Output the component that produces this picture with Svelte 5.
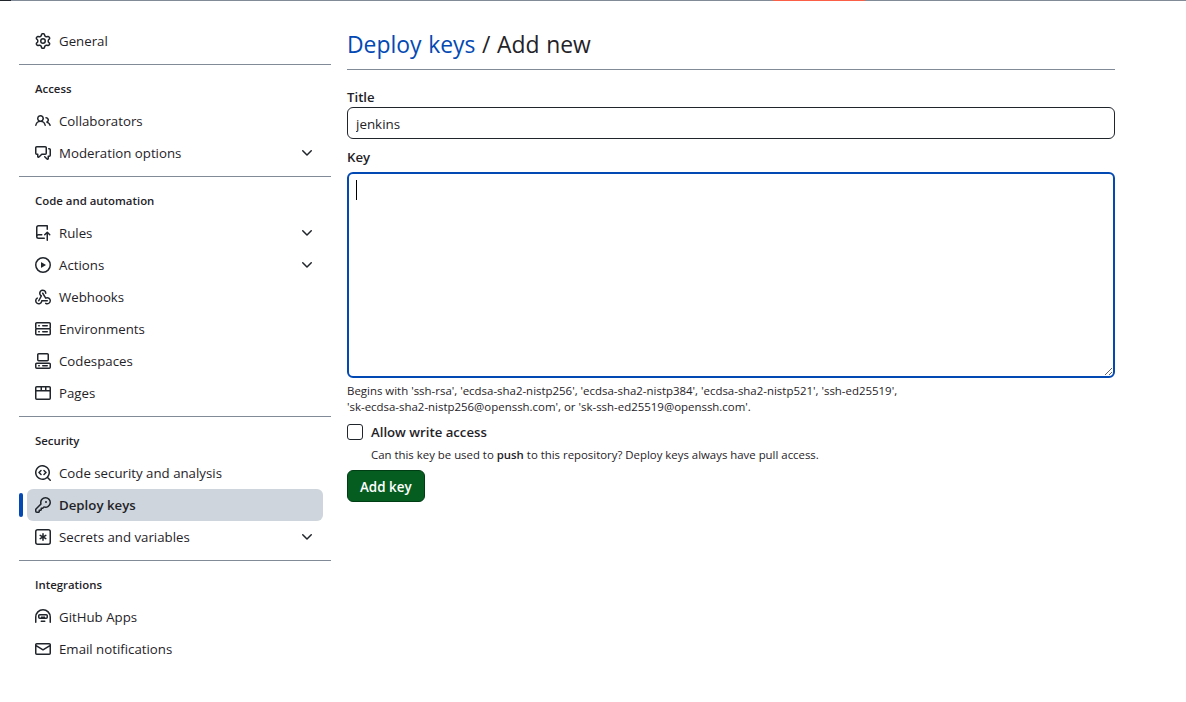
<script>
	const icons = {
		gear: "M8 0a8.2 8.2 0 0 1 .701.031C9.444.095 9.99.645 10.16 1.29l.288 1.107c.018.066.079.158.212.224.231.114.454.243.668.386.123.082.233.09.299.071l1.103-.303c.644-.176 1.392.021 1.82.63.27.385.506.792.704 1.218.315.675.111 1.422-.364 1.891l-.814.806c-.049.048-.098.147-.088.294.016.257.016.515 0 .772-.01.147.038.246.088.294l.814.806c.475.469.679 1.216.364 1.891a7.977 7.977 0 0 1-.704 1.217c-.428.61-1.176.807-1.82.63l-1.102-.302c-.067-.019-.177-.011-.3.071a5.909 5.909 0 0 1-.668.386c-.133.066-.194.158-.211.224l-.29 1.106c-.168.646-.715 1.196-1.458 1.26a8.006 8.006 0 0 1-1.402 0c-.743-.064-1.289-.614-1.458-1.26l-.289-1.106c-.018-.066-.079-.158-.212-.224a5.738 5.738 0 0 1-.668-.386c-.123-.082-.233-.09-.299-.071l-1.103.303c-.644.176-1.392-.021-1.82-.63a8.12 8.12 0 0 1-.704-1.218c-.315-.675-.111-1.422.363-1.891l.815-.806c.05-.048.098-.147.088-.294a6.214 6.214 0 0 1 0-.772c.01-.147-.038-.246-.088-.294l-.815-.806C.635 6.045.431 5.298.746 4.623a7.92 7.92 0 0 1 .704-1.217c.428-.61 1.176-.807 1.82-.63l1.102.302c.067.019.177.011.3-.071.214-.143.437-.272.668-.386.133-.066.194-.158.211-.224l.29-1.106C6.009.645 6.556.095 7.299.03 7.53.01 7.764 0 8 0Zm-.571 1.525c-.036.003-.108.036-.137.146l-.289 1.105c-.147.561-.549.967-.998 1.189-.173.086-.34.183-.5.29-.417.278-.97.423-1.529.27l-1.103-.303c-.109-.03-.175.016-.195.045-.22.312-.412.644-.573.99-.014.031-.021.11.059.19l.815.806c.411.406.562.957.53 1.456a4.709 4.709 0 0 0 0 .582c.032.499-.119 1.05-.53 1.456l-.815.806c-.081.08-.073.159-.059.19.162.346.353.677.573.989.02.03.085.076.195.046l1.102-.303c.56-.153 1.113-.008 1.53.27.161.107.328.204.501.29.447.222.85.629.997 1.189l.289 1.105c.029.109.101.143.137.146a6.6 6.6 0 0 0 1.142 0c.036-.003.108-.036.137-.146l.289-1.105c.147-.561.549-.967.998-1.189.173-.086.34-.183.5-.29.417-.278.97-.423 1.529-.27l1.103.303c.109.029.175-.016.195-.045.22-.313.411-.644.573-.99.014-.031.021-.11-.059-.19l-.815-.806c-.411-.406-.562-.957-.53-1.456a4.709 4.709 0 0 0 0-.582c-.032-.499.119-1.05.53-1.456l.815-.806c.081-.08.073-.159.059-.19a6.464 6.464 0 0 0-.573-.989c-.02-.03-.085-.076-.195-.046l-1.102.303c-.56.153-1.113.008-1.53-.27a4.44 4.44 0 0 0-.501-.29c-.447-.222-.85-.629-.997-1.189l-.289-1.105c-.029-.11-.101-.143-.137-.146a6.6 6.6 0 0 0-1.142 0ZM11 8a3 3 0 1 1-6 0 3 3 0 0 1 6 0ZM9.5 8a1.5 1.5 0 1 0-3.001.001A1.5 1.5 0 0 0 9.5 8Z",
		people: "M2 5.5a3.5 3.5 0 1 1 5.898 2.549 5.508 5.508 0 0 1 3.034 4.084.75.75 0 1 1-1.482.235 4 4 0 0 0-7.9 0 .75.75 0 0 1-1.482-.236A5.507 5.507 0 0 1 3.102 8.05 3.493 3.493 0 0 1 2 5.5ZM11 4a3.001 3.001 0 0 1 2.22 5.018 5.01 5.01 0 0 1 2.56 3.012.749.749 0 0 1-.885.954.752.752 0 0 1-.549-.514 3.507 3.507 0 0 0-2.522-2.372.75.75 0 0 1-.574-.73v-.352a.75.75 0 0 1 .416-.672A1.5 1.5 0 0 0 11 5.5.75.75 0 0 1 11 4Zm-5.5-.5a2 2 0 1 0-.001 3.999A2 2 0 0 0 5.5 3.5Z",
		discussion: "M1.75 1h8.5c.966 0 1.75.784 1.75 1.75v5.5A1.75 1.75 0 0 1 10.25 10H7.061l-2.574 2.573A1.458 1.458 0 0 1 2 11.543V10h-.25A1.75 1.75 0 0 1 0 8.25v-5.5C0 1.784.784 1 1.75 1ZM1.5 2.75v5.5c0 .138.112.25.25.25h1a.75.75 0 0 1 .75.75v2.19l2.72-2.72a.749.749 0 0 1 .53-.22h3.5a.25.25 0 0 0 .25-.25v-5.5a.25.25 0 0 0-.25-.25h-8.5a.25.25 0 0 0-.25.25Zm13 2a.25.25 0 0 0-.25-.25h-.5a.75.75 0 0 1 0-1.5h.5c.966 0 1.75.784 1.75 1.75v5.5A1.75 1.75 0 0 1 14.25 12H14v1.543a1.458 1.458 0 0 1-2.487 1.03L9.22 12.28a.749.749 0 0 1 .326-1.275.749.749 0 0 1 .734.215l2.22 2.22v-2.19a.75.75 0 0 1 .75-.75h1a.25.25 0 0 0 .25-.25Z",
		push: "M1 2.5A2.5 2.5 0 0 1 3.5 0h8.75a.75.75 0 0 1 .75.75v3.5a.75.75 0 0 1-1.5 0V1.5h-8a1 1 0 0 0-1 1v6.708A2.493 2.493 0 0 1 3.5 9h3.25a.75.75 0 0 1 0 1.5H3.5a1 1 0 0 0 0 2h5.75a.75.75 0 0 1 0 1.5H3.5A2.5 2.5 0 0 1 1 11.5Zm13.23 7.79h-.001l-1.224-1.224v6.184a.75.75 0 0 1-1.5 0V9.066L10.28 10.29a.75.75 0 0 1-1.06-1.061l2.505-2.504a.75.75 0 0 1 1.06 0L15.29 9.23a.751.751 0 0 1-.018 1.042.751.751 0 0 1-1.042.018Z",
		play: "M8 0a8 8 0 1 1 0 16A8 8 0 0 1 8 0ZM1.5 8a6.5 6.5 0 1 0 13 0 6.5 6.5 0 0 0-13 0Zm4.879-2.773 4.264 2.559a.25.25 0 0 1 0 .428l-4.264 2.559A.25.25 0 0 1 6 10.559V5.442a.25.25 0 0 1 .379-.215Z",
		webhook: "M5.5 4.25a2.25 2.25 0 0 1 4.5 0 .75.75 0 0 0 1.5 0 3.75 3.75 0 1 0-6.14 2.889l-2.272 4.258a.75.75 0 0 0 1.324.706L7 7.25a.75.75 0 0 0-.309-1.015A2.25 2.25 0 0 1 5.5 4.25Z M7.364 3.607a.75.75 0 0 1 1.03.257l2.608 4.349a3.75 3.75 0 1 1-.628 6.785.75.75 0 0 1 .752-1.299 2.25 2.25 0 1 0-.033-3.88.75.75 0 0 1-1.03-.256L7.107 4.636a.75.75 0 0 1 .257-1.03Z M2.9 8.776A.75.75 0 0 1 2.625 9.8 2.25 2.25 0 1 0 6 11.75a.75.75 0 0 1 .75-.751h5.5a.75.75 0 0 1 0 1.5H7.425a3.751 3.751 0 1 1-5.55-3.998.75.75 0 0 1 1.024.274Z",
		server: "M1.75 1h12.5c.966 0 1.75.784 1.75 1.75v4c0 .372-.116.717-.314 1 .198.283.314.628.314 1v4a1.75 1.75 0 0 1-1.75 1.75H1.75A1.75 1.75 0 0 1 0 12.75v-4c0-.358.109-.707.314-1a1.739 1.739 0 0 1-.314-1v-4C0 1.784.784 1 1.75 1ZM1.5 2.75v4c0 .138.112.25.25.25h12.5a.25.25 0 0 0 .25-.25v-4a.25.25 0 0 0-.25-.25H1.75a.25.25 0 0 0-.25.25Zm.25 5.75a.25.25 0 0 0-.25.25v4c0 .138.112.25.25.25h12.5a.25.25 0 0 0 .25-.25v-4a.25.25 0 0 0-.25-.25ZM7 4.75A.75.75 0 0 1 7.75 4h4.5a.75.75 0 0 1 0 1.5h-4.5A.75.75 0 0 1 7 4.75ZM7.75 10h4.5a.75.75 0 0 1 0 1.5h-4.5a.75.75 0 0 1 0-1.5ZM3 4.75A.75.75 0 0 1 3.75 4h.5a.75.75 0 0 1 0 1.5h-.5A.75.75 0 0 1 3 4.75ZM3.75 10h.5a.75.75 0 0 1 0 1.5h-.5a.75.75 0 0 1 0-1.5Z",
		codespaces: "M0 11.25c0-.966.784-1.75 1.75-1.75h12.5c.966 0 1.75.784 1.75 1.75v3A1.75 1.75 0 0 1 14.25 16H1.75A1.75 1.75 0 0 1 0 14.25Zm2-9.5C2 .784 2.784 0 3.75 0h8.5C13.216 0 14 .784 14 1.75v5a1.75 1.75 0 0 1-1.75 1.75h-8.5A1.75 1.75 0 0 1 2 6.75Zm1.75-.25a.25.25 0 0 0-.25.25v5c0 .138.112.25.25.25h8.5a.25.25 0 0 0 .25-.25v-5a.25.25 0 0 0-.25-.25Zm-2 9.5a.25.25 0 0 0-.25.25v3c0 .138.112.25.25.25h12.5a.25.25 0 0 0 .25-.25v-3a.25.25 0 0 0-.25-.25Z M7 12.75a.75.75 0 0 1 .75-.75h4.5a.75.75 0 0 1 0 1.5h-4.5a.75.75 0 0 1-.75-.75Zm-4 0a.75.75 0 0 1 .75-.75h.5a.75.75 0 0 1 0 1.5h-.5a.75.75 0 0 1-.75-.75Z",
		browser: "M0 2.75C0 1.784.784 1 1.75 1h12.5c.966 0 1.75.784 1.75 1.75v10.5A1.75 1.75 0 0 1 14.25 15H1.75A1.75 1.75 0 0 1 0 13.25ZM14.5 6.5h-13v6.75c0 .138.112.25.25.25h12.5a.25.25 0 0 0 .25-.25ZM5.5 2.5H1.75a.25.25 0 0 0-.25.25V5h4ZM7 2.5V5h3V2.5Zm4.5 0V5h3V2.75a.25.25 0 0 0-.25-.25Z",
		codescan: "M8.47 4.97a.75.75 0 0 0 0 1.06L9.94 7.5 8.47 8.97a.75.75 0 1 0 1.06 1.06l2-2a.75.75 0 0 0 0-1.06l-2-2a.75.75 0 0 0-1.06 0ZM6.53 6.03a.75.75 0 0 0-1.06-1.06l-2 2a.75.75 0 0 0 0 1.06l2 2a.75.75 0 1 0 1.06-1.06L5.06 7.5l1.47-1.47Z M12.246 13.307a7.501 7.501 0 1 1 1.06-1.06l2.474 2.473a.749.749 0 0 1-.326 1.275.749.749 0 0 1-.734-.215ZM1.5 7.5a6.002 6.002 0 0 0 3.608 5.504 6.002 6.002 0 0 0 6.486-1.117.748.748 0 0 1 .292-.293A6 6 0 1 0 1.5 7.5Z",
		key: "M10.5 0a5.499 5.499 0 1 1-1.288 10.848l-.932.932a.749.749 0 0 1-.53.22H7v.75a.749.749 0 0 1-.22.53l-.5.5a.749.749 0 0 1-.53.22H5v.75a.749.749 0 0 1-.22.53l-.5.5a.749.749 0 0 1-.53.22h-2A1.75 1.75 0 0 1 0 14.25v-2c0-.199.079-.389.22-.53l4.932-4.932A5.5 5.5 0 0 1 10.5 0Zm-4 5.5c-.001.431.069.86.205 1.269a.75.75 0 0 1-.181.768L1.5 12.56v1.69c0 .138.112.25.25.25h1.69l.06-.06v-1.19a.75.75 0 0 1 .75-.75h1.19l.06-.06v-1.19a.75.75 0 0 1 .75-.75h1.19l1.023-1.025a.75.75 0 0 1 .768-.18A4 4 0 1 0 6.5 5.5ZM11 6a1 1 0 1 1 0-2 1 1 0 0 1 0 2Z",
		asterisk: "M0 2.75A2.75 2.75 0 0 1 2.75 0h10.5A2.75 2.75 0 0 1 16 2.75v10.5A2.75 2.75 0 0 1 13.25 16H2.75A2.75 2.75 0 0 1 0 13.25ZM2.75 1.5c-.69 0-1.25.56-1.25 1.25v10.5c0 .69.56 1.25 1.25 1.25h10.5c.69 0 1.25-.56 1.25-1.25V2.75c0-.69-.56-1.25-1.25-1.25Z M8 4a.75.75 0 0 1 .75.75V6.7l1.69-.975a.75.75 0 0 1 .75 1.3L9.5 8l1.69.976a.75.75 0 0 1-.75 1.298L8.75 9.299v1.951a.75.75 0 0 1-1.5 0V9.299l-1.69.975a.75.75 0 0 1-.75-1.298L6.5 8l-1.69-.975a.75.75 0 0 1 .75-1.3l1.69.976V4.75A.75.75 0 0 1 8 4Z",
		hubot: "M0 8a8 8 0 0 1 16 0v5.25a.75.75 0 0 1-1.5 0V8a6.5 6.5 0 1 0-13 0v5.25a.75.75 0 0 1-1.5 0Zm3-1.25C3 5.784 3.784 5 4.75 5h6.5c.966 0 1.75.784 1.75 1.75v1.5A1.75 1.75 0 0 1 11.25 10h-6.5A1.75 1.75 0 0 1 3 8.25Zm1.75-.25a.25.25 0 0 0-.25.25v1.5c0 .138.112.25.25.25h6.5a.25.25 0 0 0 .25-.25v-1.5a.25.25 0 0 0-.25-.25ZM6 7.5h4V9H6ZM6.25 11.5h3.5a.75.75 0 0 1 0 1.5h-3.5a.75.75 0 0 1 0-1.5Z",
		mail: "M1.75 2h12.5c.966 0 1.75.784 1.75 1.75v8.5A1.75 1.75 0 0 1 14.25 14H1.75A1.75 1.75 0 0 1 0 12.25v-8.5C0 2.784.784 2 1.75 2ZM1.5 12.251c0 .138.112.25.25.25h12.5a.25.25 0 0 0 .25-.25V5.809L8.38 9.397a.75.75 0 0 1-.76 0L1.5 5.809v6.442Zm13-8.181v-.32a.25.25 0 0 0-.25-.25H1.75a.25.25 0 0 0-.25.25v.32L8 7.88l6.5-3.81Z",
		chevron: "M12.78 5.22a.749.749 0 0 1 0 1.06l-4.25 4.25a.749.749 0 0 1-1.06 0L3.22 6.28a.749.749 0 1 1 1.06-1.06L8 8.939l3.72-3.719a.749.749 0 0 1 1.06 0Z",
	};

	const groups = [
		{ items: [{ label: "General", icon: "gear" }] },
		{
			title: "Access",
			items: [
				{ label: "Collaborators", icon: "people" },
				{ label: "Moderation options", icon: "discussion", more: true },
			],
		},
		{
			title: "Code and automation",
			items: [
				{ label: "Rules", icon: "push", more: true },
				{ label: "Actions", icon: "play", more: true },
				{ label: "Webhooks", icon: "webhook" },
				{ label: "Environments", icon: "server" },
				{ label: "Codespaces", icon: "codespaces" },
				{ label: "Pages", icon: "browser" },
			],
		},
		{
			title: "Security",
			items: [
				{ label: "Code security and analysis", icon: "codescan" },
				{ label: "Deploy keys", icon: "key", active: true },
				{ label: "Secrets and variables", icon: "asterisk", more: true },
			],
		},
		{
			title: "Integrations",
			items: [
				{ label: "GitHub Apps", icon: "hubot" },
				{ label: "Email notifications", icon: "mail" },
			],
		},
	];
</script>

<div class="topline">
	<span class="seg dark"></span>
	<span class="seg first"></span>
	<span class="seg orange"></span>
	<span class="seg rest"></span>
</div>

<div class="page">
	<nav class="sidebar">
		{#each groups as group, g (g)}
			{#if g > 0}
				<hr />
			{/if}
			{#if group.title}
				<h3>{group.title}</h3>
			{/if}
			{#each group.items as item (item.label)}
				<div class="row">
					{#if item.active}
						<span class="marker"></span>
					{/if}
					<div class="item" class:active={item.active}>
						<svg viewBox="0 0 16 16" width="16" height="16"><path d={icons[item.icon]} /></svg>
						<span class="label">{item.label}</span>
						{#if item.more}
							<svg class="chevron" viewBox="0 0 16 16" width="16" height="16"><path d={icons.chevron} /></svg>
						{/if}
					</div>
				</div>
			{/each}
		{/each}
	</nav>

	<main>
		<h2><a href="#keys">Deploy keys</a> / Add new</h2>

		<form>
			<label class="field" for="title">Title</label>
			<input id="title" type="text" value="jenkins" />

			<label class="field key" for="key">Key</label>
			<div class="keybox">
				<textarea id="key"></textarea>
				<span class="caret"></span>
			</div>
			<p class="note begins">
				Begins with 'ssh-rsa', 'ecdsa-sha2-nistp256', 'ecdsa-sha2-nistp384', 'ecdsa-sha2-nistp521', 'ssh-ed25519',<br />
				'sk-ecdsa-sha2-nistp256@openssh.com', or 'sk-ssh-ed25519@openssh.com'.
			</p>

			<div class="check">
				<input id="write" type="checkbox" />
				<label for="write">Allow write access</label>
			</div>
			<p class="note hint">Can this key be used to <b>push</b> to this repository? Deploy keys always have pull access.</p>

			<button type="button">Add key</button>
		</form>
	</main>
</div>

<style>
	:global(body) {
		background: #fff;
		color: #1f2328;
		font-family: "Open Sans", "Noto Sans", sans-serif;
		font-size: 13.4px;
	}

	.topline {
		display: flex;
		height: 1px;
		background: #818b98;
	}

	.seg {
		height: 1px;
	}

	.dark {
		width: 11px;
		background: #20252c;
	}

	.first {
		width: 762px;
	}

	.orange {
		width: 92px;
		background: #fb5f45;
	}

	.page {
		display: flex;
		align-items: flex-start;
		padding: 24px 0 0 19px;
	}

	.sidebar {
		width: 312px;
		flex: none;
	}

	hr {
		height: 1px;
		margin: 7px 0 0;
		border: 0;
		background: #818b98;
	}

	h3 {
		margin: 14px 0 6px 16px;
		font-size: 11.4px;
		font-weight: 600;
		line-height: 20px;
	}

	.row {
		position: relative;
		padding: 0 8px;
	}

	.marker {
		position: absolute;
		left: 0;
		top: 4px;
		width: 4px;
		height: 24px;
		border-radius: 2px;
		background: #0349b4;
	}

	.item {
		display: flex;
		align-items: center;
		height: 32px;
		padding: 0 8px;
		gap: 8px;
		border-radius: 6px;
		font-size: 13.25px;
	}

	.item svg {
		flex: none;
		fill: #20252c;
	}

	.item.active {
		background: #ced5dc;
		font-weight: 600;
	}

	.label {
		flex: 1;
		line-height: 20px;
	}

	main {
		width: 768px;
		margin-left: 16px;
	}

	h2 {
		margin: 0;
		padding: 2px 0 6px;
		border-bottom: 1px solid #818b98;
		font-size: 22.9px;
		font-weight: 400;
		line-height: 36px;
		word-spacing: 0.7px;
	}

	a {
		color: #0349b4;
		text-decoration: none;
	}

	form {
		display: flex;
		flex-direction: column;
		align-items: flex-start;
		padding-top: 17px;
	}

	.field {
		font-size: 13.2px;
		font-weight: 600;
		line-height: 20px;
	}

	.key {
		margin-top: 8px;
		margin-bottom: 5px;
	}

	input[type="text"] {
		box-sizing: border-box;
		width: 768px;
		height: 32px;
		padding: 1px 8px 0;
		border: 1px solid #20252c;
		border-radius: 6px;
		color: inherit;
		font: inherit;
		outline: none;
	}

	.keybox {
		position: relative;
		height: 206px;
	}

	textarea {
		display: block;
		box-sizing: border-box;
		width: 768px;
		height: 206px;
		padding: 8px;
		border: 2px solid #0349b4;
		border-radius: 6px;
		outline: none;
		resize: vertical;
	}

	.caret {
		position: absolute;
		left: 9px;
		top: 8px;
		width: 1px;
		height: 20px;
		background: #000;
	}

	.note {
		margin: 0;
		font-size: 11.4px;
		line-height: 16px;
	}

	.begins {
		margin-top: 5px;
		font-size: 11.45px;
	}

	.check {
		display: flex;
		align-items: center;
		gap: 8px;
		margin-top: 9px;
		line-height: 16px;
	}

	.check input {
		box-sizing: border-box;
		width: 16px;
		height: 16px;
		margin: 0;
		appearance: none;
		border: 1px solid #20252c;
		border-radius: 3px;
		background: #fff;
	}

	.check label {
		font-size: 13.2px;
		font-weight: 600;
	}

	.hint {
		margin-top: 7px;
		margin-left: 24px;
	}

	.hint b {
		font-weight: 600;
	}

	button {
		box-sizing: border-box;
		height: 32px;
		margin-top: 7px;
		padding: 1px 12px 0;
		border: 1px solid #013d14;
		border-radius: 6px;
		background: #055d20;
		color: #fff;
		font: inherit;
		font-weight: 600;
	}
</style>
